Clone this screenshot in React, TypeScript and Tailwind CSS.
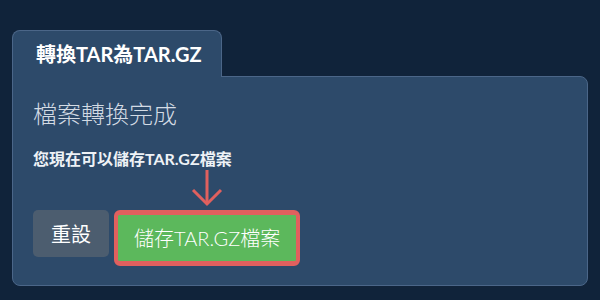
import React from "react";

export default function App() {
  const font = { fontFamily: 'Lato, "Noto Sans CJK TC", sans-serif' };
  return (
    <div className="w-[600px] h-[300px] bg-[#10233a] pt-[30px] px-3" style={font}>
      <div className="relative z-10 -mb-px flex h-[47px] w-[210px] items-center rounded-t-lg border border-b-0 border-[#4b6688] bg-[#2d4a6a] pl-[23px]">
        <span className="text-[20px] font-bold leading-none text-white">轉換TAR為TAR.GZ</span>
      </div>
      <div className="h-[210px] rounded-b-lg rounded-tr-lg border border-[#4b6688] bg-[#2d4a6a] pl-[20px] pt-[21px]">
        <div className="h-[32px] text-[24px] font-light leading-[32px] text-[#d3dbe4]">檔案轉換完成</div>
        <div className="mt-[19px] h-[20px] text-[16px] font-bold leading-[20px] text-[#eef2f6]">您現在可以儲存TAR.GZ檔案</div>
        <div className="mt-[41px] flex items-start gap-[5px]">
          <button className="h-[47px] rounded-[5px] bg-[#4c5d6f] px-[18px] text-[20px] leading-none text-white">重設</button>
          <div className="relative">
            <svg
              className="absolute bottom-full left-1/2 mb-[3px] -translate-x-1/2"
              width="32"
              height="37"
              viewBox="0 0 32 37"
              fill="none"
              stroke="#e0605e"
              strokeWidth="3"
            >
              <line x1="16" y1="0" x2="16" y2="34" />
              <polyline points="2,20 16,34 30,20" />
            </svg>
            <button className="h-[56px] rounded-[6px] border-[5px] border-x-[4px] border-[#e0605e] bg-[#5cb85c] px-[16px] text-[20px] font-light leading-none text-white">
              儲存TAR.GZ檔案
            </button>
          </div>
        </div>
      </div>
    </div>
  );
}
